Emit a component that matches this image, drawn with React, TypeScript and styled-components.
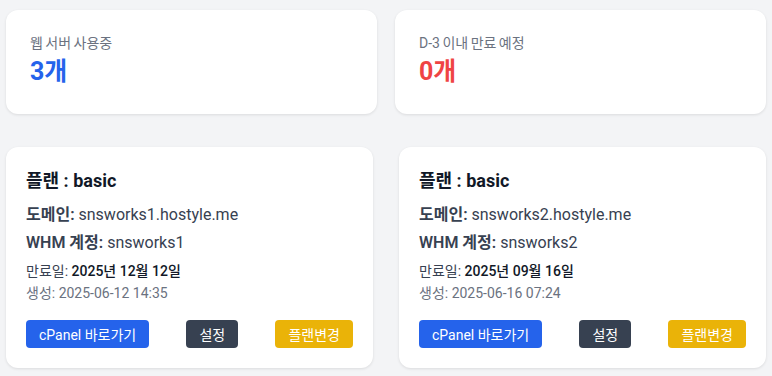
import React from "react";
import styled, { createGlobalStyle } from "styled-components";

const GlobalStyle = createGlobalStyle`
  body {
    margin: 0;
    background: #f3f4f6;
    font-family: Roboto, "Noto Sans CJK KR", sans-serif;
  }
`;

const Page = styled.div`
  padding: 10px 6px;
`;

const SummaryRow = styled.div`
  display: grid;
  grid-template-columns: 1fr 1fr;
  gap: 18px;
`;

const SummaryCard = styled.div`
  background: #ffffff;
  border-radius: 12px;
  box-shadow: 0 1px 3px rgba(0, 0, 0, 0.1);
  padding: 24px 24px 26px;
`;

const SummaryLabel = styled.div`
  font-size: 14px;
  line-height: 18px;
  color: #6b7280;
  word-spacing: -1px;
`;

const SummaryValue = styled.div<{ $tone: "blue" | "red" }>`
  margin-top: 4px;
  font-size: 25px;
  line-height: 32px;
  font-weight: 700;
  color: ${({ $tone }) => ($tone === "blue" ? "#2563eb" : "#ef4444")};
`;

const HostGrid = styled.div`
  margin-top: 33px;
  display: grid;
  grid-template-columns: 1fr 1fr;
  gap: 26px;
`;

const HostCard = styled.div`
  background: #ffffff;
  border-radius: 12px;
  box-shadow: 0 1px 3px rgba(0, 0, 0, 0.1);
  padding: 20px;
`;

const PlanTitle = styled.div`
  font-size: 18px;
  line-height: 28px;
  font-weight: 700;
  color: #111827;
`;

const InfoLine = styled.div<{ $first?: boolean }>`
  margin-top: ${({ $first }) => ($first ? "8px" : "4px")};
  font-size: 16px;
  line-height: 24px;
  color: #374151;

  b {
    font-weight: 600;
  }
`;

const DateLine = styled.div<{ $muted?: boolean }>`
  margin-top: ${({ $muted }) => ($muted ? "2px" : "6px")};
  font-size: 14px;
  line-height: 20px;
  color: ${({ $muted }) => ($muted ? "#6b7280" : "#374151")};

  strong {
    font-weight: 500;
    color: #111827;
  }
`;

const Actions = styled.div`
  margin-top: 17px;
  display: flex;
  justify-content: space-between;
  align-items: center;
`;

const ActionButton = styled.button<{ $variant: "blue" | "dark" | "yellow" }>`
  height: 28px;
  padding: 0 13px;
  border: none;
  border-radius: 4px;
  font-family: inherit;
  font-size: 14px;
  color: #ffffff;
  cursor: pointer;
  background: ${({ $variant }) =>
    $variant === "blue" ? "#2563eb" : $variant === "dark" ? "#374151" : "#eab308"};
`;

type Host = {
  plan: string;
  domain: string;
  whm: string;
  expires: string;
  created: string;
};

const hosts: Host[] = [
  {
    plan: "basic",
    domain: "snsworks1.hostyle.me",
    whm: "snsworks1",
    expires: "2025년 12월 12일",
    created: "2025-06-12 14:35",
  },
  {
    plan: "basic",
    domain: "snsworks2.hostyle.me",
    whm: "snsworks2",
    expires: "2025년 09월 16일",
    created: "2025-06-16 07:24",
  },
];

const App: React.FC = () => {
  return (
    <Page>
      <GlobalStyle />
      <SummaryRow>
        <SummaryCard>
          <SummaryLabel>웹 서버 사용중</SummaryLabel>
          <SummaryValue $tone="blue">3개</SummaryValue>
        </SummaryCard>
        <SummaryCard>
          <SummaryLabel>D-3 이내 만료 예정</SummaryLabel>
          <SummaryValue $tone="red">0개</SummaryValue>
        </SummaryCard>
      </SummaryRow>
      <HostGrid>
        {hosts.map(host => (
          <HostCard key={host.domain}>
            <PlanTitle>플랜 : {host.plan}</PlanTitle>
            <InfoLine $first>
              <b>도메인:</b> {host.domain}
            </InfoLine>
            <InfoLine>
              <b>WHM 계정:</b> {host.whm}
            </InfoLine>
            <DateLine>
              만료일: <strong>{host.expires}</strong>
            </DateLine>
            <DateLine $muted>생성: {host.created}</DateLine>
            <Actions>
              <ActionButton $variant="blue">cPanel 바로가기</ActionButton>
              <ActionButton $variant="dark">설정</ActionButton>
              <ActionButton $variant="yellow">플랜변경</ActionButton>
            </Actions>
          </HostCard>
        ))}
      </HostGrid>
    </Page>
  );
};

export default App;
